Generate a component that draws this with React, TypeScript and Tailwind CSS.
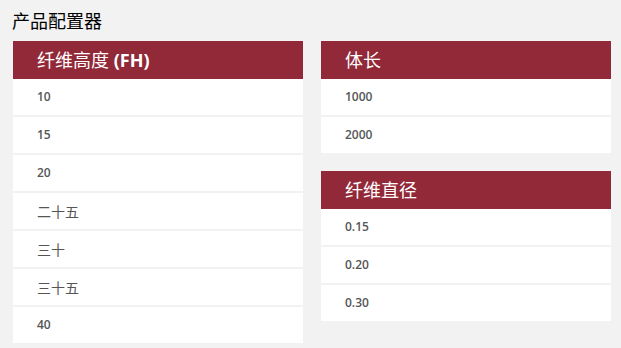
import React from 'react';

const font = { fontFamily: '"Open Sans", "Noto Sans CJK SC", sans-serif' };

type Group = { title: React.ReactNode; items: string[] };

const isLatin = (s: string) => /^[0-9.]+$/.test(s);

const Card: React.FC<Group> = ({ title, items }) => (
    <div className="flex flex-col">
        <div className="h-[38px] bg-[#922939] text-white text-[18px] leading-[38px] pl-[24px]">
            {title}
        </div>
        <div className="flex flex-col gap-[2px]">
            {items.map((item) => (
                <div key={item} className="h-[36px] bg-white pl-[24px] flex items-center text-[#555555]">
                    {isLatin(item) ? (
                        <span className="text-[12px] font-semibold">{item}</span>
                    ) : (
                        <span className="text-[14px]">{item}</span>
                    )}
                </div>
            ))}
        </div>
    </div>
);

const App: React.FC = () => {
    return (
        <div className="min-h-screen bg-[#f2f2f2] pl-[12px] pt-[8px]" style={font}>
            <h1 className="text-[18px] leading-[26px] text-black">产品配置器</h1>
            <div className="mt-[7px] ml-[1px] grid grid-cols-[290px_290px] gap-x-[18px] items-start">
                <Card
                    title={<>纤维高度 <span className="font-bold">(FH)</span></>}
                    items={['10', '15', '20', '二十五', '三十', '三十五', '40']}
                />
                <div className="flex flex-col gap-[18px]">
                    <Card title="体长" items={['1000', '2000']} />
                    <Card title="纤维直径" items={['0.15', '0.20', '0.30']} />
                </div>
            </div>
        </div>
    );
};

export default App;
